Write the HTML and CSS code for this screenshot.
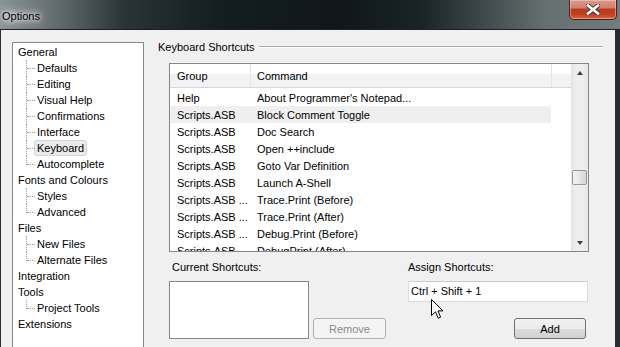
FILE: index.html
```html
<!DOCTYPE html>
<html lang="en">
<head>
  <meta charset="UTF-8" />
  <title>Options</title>
  <link rel="stylesheet" href="styles.css">
</head>
<body>
  <div class="titlebar">
    <span class="title">Options</span>
    <button class="close-btn" title="Close">
      <svg width="14" height="11" viewBox="0 0 14 11">
        <path d="M2 1.5 L12 9.5 M12 1.5 L2 9.5" stroke="#3a3a3a" stroke-width="4.5" stroke-linecap="square"/>
        <path d="M2 1.5 L12 9.5 M12 1.5 L2 9.5" stroke="#fff" stroke-width="2.6" stroke-linecap="square"/>
      </svg>
    </button>
  </div>

  <div class="client">
    <div class="tree">
      <div class="node">General</div>
      <div class="children">
        <div class="leaf">Defaults</div>
        <div class="leaf">Editing</div>
        <div class="leaf">Visual Help</div>
        <div class="leaf">Confirmations</div>
        <div class="leaf">Interface</div>
        <div class="leaf"><span class="sel">Keyboard</span></div>
        <div class="leaf">Autocomplete</div>
      </div>
      <div class="node">Fonts and Colours</div>
      <div class="children">
        <div class="leaf">Styles</div>
        <div class="leaf">Advanced</div>
      </div>
      <div class="node">Files</div>
      <div class="children">
        <div class="leaf">New Files</div>
        <div class="leaf">Alternate Files</div>
      </div>
      <div class="node">Integration</div>
      <div class="node">Tools</div>
      <div class="children">
        <div class="leaf">Project Tools</div>
      </div>
      <div class="node">Extensions</div>
    </div>

    <section class="panel">
      <div class="group-title"><span>Keyboard Shortcuts</span><span class="rule"></span></div>

      <div class="listview">
        <div class="lv-main">
          <div class="lv-header">
            <div class="col col-group">Group</div>
            <div class="col col-cmd">Command</div>
            <div class="col col-fill"></div>
          </div>
          <div class="lv-rows">
            <div class="lv-row"><span class="cell-group">Help</span><span class="cell-cmd">About Programmer's Notepad...</span></div>
            <div class="lv-row selected"><span class="cell-group">Scripts.ASB</span><span class="cell-cmd">Block Comment Toggle</span></div>
            <div class="lv-row"><span class="cell-group">Scripts.ASB</span><span class="cell-cmd">Doc Search</span></div>
            <div class="lv-row"><span class="cell-group">Scripts.ASB</span><span class="cell-cmd">Open ++include</span></div>
            <div class="lv-row"><span class="cell-group">Scripts.ASB</span><span class="cell-cmd">Goto Var Definition</span></div>
            <div class="lv-row"><span class="cell-group">Scripts.ASB</span><span class="cell-cmd">Launch A-Shell</span></div>
            <div class="lv-row"><span class="cell-group">Scripts.ASB ...</span><span class="cell-cmd">Trace.Print (Before)</span></div>
            <div class="lv-row"><span class="cell-group">Scripts.ASB ...</span><span class="cell-cmd">Trace.Print (After)</span></div>
            <div class="lv-row"><span class="cell-group">Scripts.ASB ...</span><span class="cell-cmd">Debug.Print (Before)</span></div>
            <div class="lv-row"><span class="cell-group">Scripts.ASB</span><span class="cell-cmd">DebugPrint (After)</span></div>
          </div>
        </div>
        <div class="scrollbar">
          <div class="sb-btn"><span class="arrow-up"></span></div>
          <div class="sb-track"><div class="sb-thumb"></div></div>
          <div class="sb-btn"><span class="arrow-down"></span></div>
        </div>
      </div>

      <div class="shortcuts">
        <div class="current">
          <div class="label">Current Shortcuts:</div>
          <div class="current-body">
            <div class="shortcut-list"></div>
            <button class="btn" disabled>Remove</button>
          </div>
        </div>
        <div class="assign">
          <div class="label">Assign Shortcuts:</div>
          <div class="hotkey">Ctrl + Shift + 1</div>
          <button class="btn btn-add">Add</button>
        </div>
      </div>
    </section>
  </div>

  <svg class="cursor" width="13" height="20" viewBox="0 0 13 20">
    <path d="M0.5 0.5 L0.5 16.5 L4.5 12.8 L7.2 19.2 L9.6 18.2 L7 11.9 L12 11.9 Z" fill="#fff" stroke="#000" stroke-width="1"/>
  </svg>
</body>
</html>
```

FILE: styles.css
```css
*,*::before,*::after{box-sizing:border-box;}
body{
  margin:0;
  width:620px;height:347px;
  overflow:hidden;
  position:relative;
  background:#262c2e;
  font-family:"Liberation Sans", Arial, sans-serif;
  font-size:11px;
  color:#000;
}
.titlebar{
  height:30px;
  display:flex;align-items:flex-start;
  background:linear-gradient(90deg,#8a9497 0%,#5e686b 10%,#2a3437 20%,#141d21 35%,#0f171a 55%,#1a2326 68%,#3f494c 78%,#66706f 88%,#737c7e 100%);
  border-bottom:1px solid #1b2124;
}
.title{
  margin:9px 0 0 2px;
  line-height:14px;
  color:#000;
  text-shadow:0 0 4px #fff,0 0 8px #fff,0 0 12px rgba(255,255,255,.8);
}
.close-btn{
  margin-left:auto;margin-right:3px;
  width:48px;height:20px;padding:0;
  display:flex;align-items:center;justify-content:center;
  border:1px solid #4a2119;border-top:none;
  border-radius:0 0 5px 5px;
  background:linear-gradient(#dc9c8e 0%,#d0806d 40%,#bb3a1f 50%,#c1401f 75%,#d9643f 100%);
  box-shadow:inset 0 0 0 1px rgba(255,220,210,.45);
}
.client{
  margin-left:1px;
  width:614px;height:317px;
  background:#f0f0f0;
  display:flex;
  padding:10px 0 0 11px;
  gap:14px;
}

/* tree */
.tree{
  width:132px;height:320px;
  margin-top:2px;
  border:1px solid #828790;
  background:#fff;
  padding:1px 0 0 5px;
}
.node,.leaf{height:16px;line-height:16px;white-space:nowrap;}
.leaf{position:relative;padding-left:19px;}
.leaf::before{
  content:"";position:absolute;left:8px;top:0;height:16px;
  border-left:1px dotted #a0a0a0;
}
.leaf:last-child::before{height:9px;}
.leaf::after{
  content:"";position:absolute;left:9px;top:8px;width:8px;
  border-top:1px dotted #a0a0a0;
}
.sel{
  display:inline-block;height:16px;line-height:14px;
  margin-left:-3px;padding:0 2px;
  background:#ebebeb;border:1px solid #d6d6d6;border-radius:2px;
}

/* right side */
.panel{width:445px;display:flex;flex-direction:column;}
.group-title{display:flex;align-items:center;height:14px;line-height:14px;}
.rule{flex:1;margin-left:4px;border-top:1px solid #a9a9a9;border-bottom:1px solid #fff;}

.listview{
  margin:9px 0 0 11px;
  width:420px;height:189px;
  border:1px solid #828790;
  background:#fff;
  display:flex;
  overflow:hidden;
}
.lv-main{flex:1;overflow:hidden;}
.lv-header{
  display:flex;height:24px;
  border-bottom:1px solid #d5d5d5;
  background:linear-gradient(#fff 0,#fff 42%,#f1f2f4 42%,#f1f2f4 100%);
}
.col{line-height:25px;border-right:1px solid #e2e4e7;white-space:nowrap;}
.col-group{width:81px;padding-left:7px;}
.col-cmd{width:301px;padding-left:6px;}
.col-fill{flex:1;border-right:none;}
.lv-rows{padding-top:1px;}
.lv-row{display:flex;width:381px;height:17px;line-height:18px;white-space:nowrap;}
.lv-row.selected{background:#efefef;}
.cell-group{width:81px;padding-left:7px;overflow:hidden;}
.cell-cmd{padding-left:6px;}

.scrollbar{
  width:17px;
  display:flex;flex-direction:column;
  background:linear-gradient(90deg,#e4e4e4,#eeeeee 30%,#eeeeee 70%,#e6e6e6);
}
.sb-btn{height:17px;display:flex;align-items:center;justify-content:center;}
.arrow-up,.arrow-down{width:0;height:0;border-left:3.5px solid transparent;border-right:3.5px solid transparent;}
.arrow-up{border-bottom:4px solid #3e3e3e;}
.arrow-down{border-top:4px solid #3e3e3e;}
.sb-track{flex:1;}
.sb-thumb{
  width:15px;height:15px;
  margin:89px auto 0;
  border:1px solid #979797;border-radius:2px;
  background:linear-gradient(90deg,#f4f4f4,#e6e6e6 50%,#d5d5d5);
}

.shortcuts{display:flex;margin:8px 0 0 11px;}
.label{height:14px;line-height:14px;white-space:nowrap;}
.current{width:217px;}
.current .label{padding-left:3px;}
.current-body{display:flex;align-items:flex-end;gap:4px;margin-top:7px;}
.shortcut-list{width:140px;height:58px;border:1px solid #828790;background:#fff;}
.btn{
  width:73px;height:21px;padding:0;
  font-family:inherit;font-size:11px;color:#000;
  border:1px solid #707070;border-radius:3px;
  background:linear-gradient(#f2f2f2 0%,#ebebeb 50%,#dddddd 50%,#cfcfcf 100%);
}
.btn:disabled{color:#8a8a8a;border-color:#adb2b5;background:#f4f4f4;}
.assign{margin-left:22px;width:180px;display:flex;flex-direction:column;}
.hotkey{
  margin-top:7px;height:21px;line-height:19px;
  padding-left:2px;
  background:#fff;
  border:1px solid #dcdcdc;border-top-color:#cacaca;
}
.btn-add{width:72px;margin-top:16px;align-self:flex-end;margin-right:2px;}

.cursor{position:absolute;left:431px;top:299px;}
```
